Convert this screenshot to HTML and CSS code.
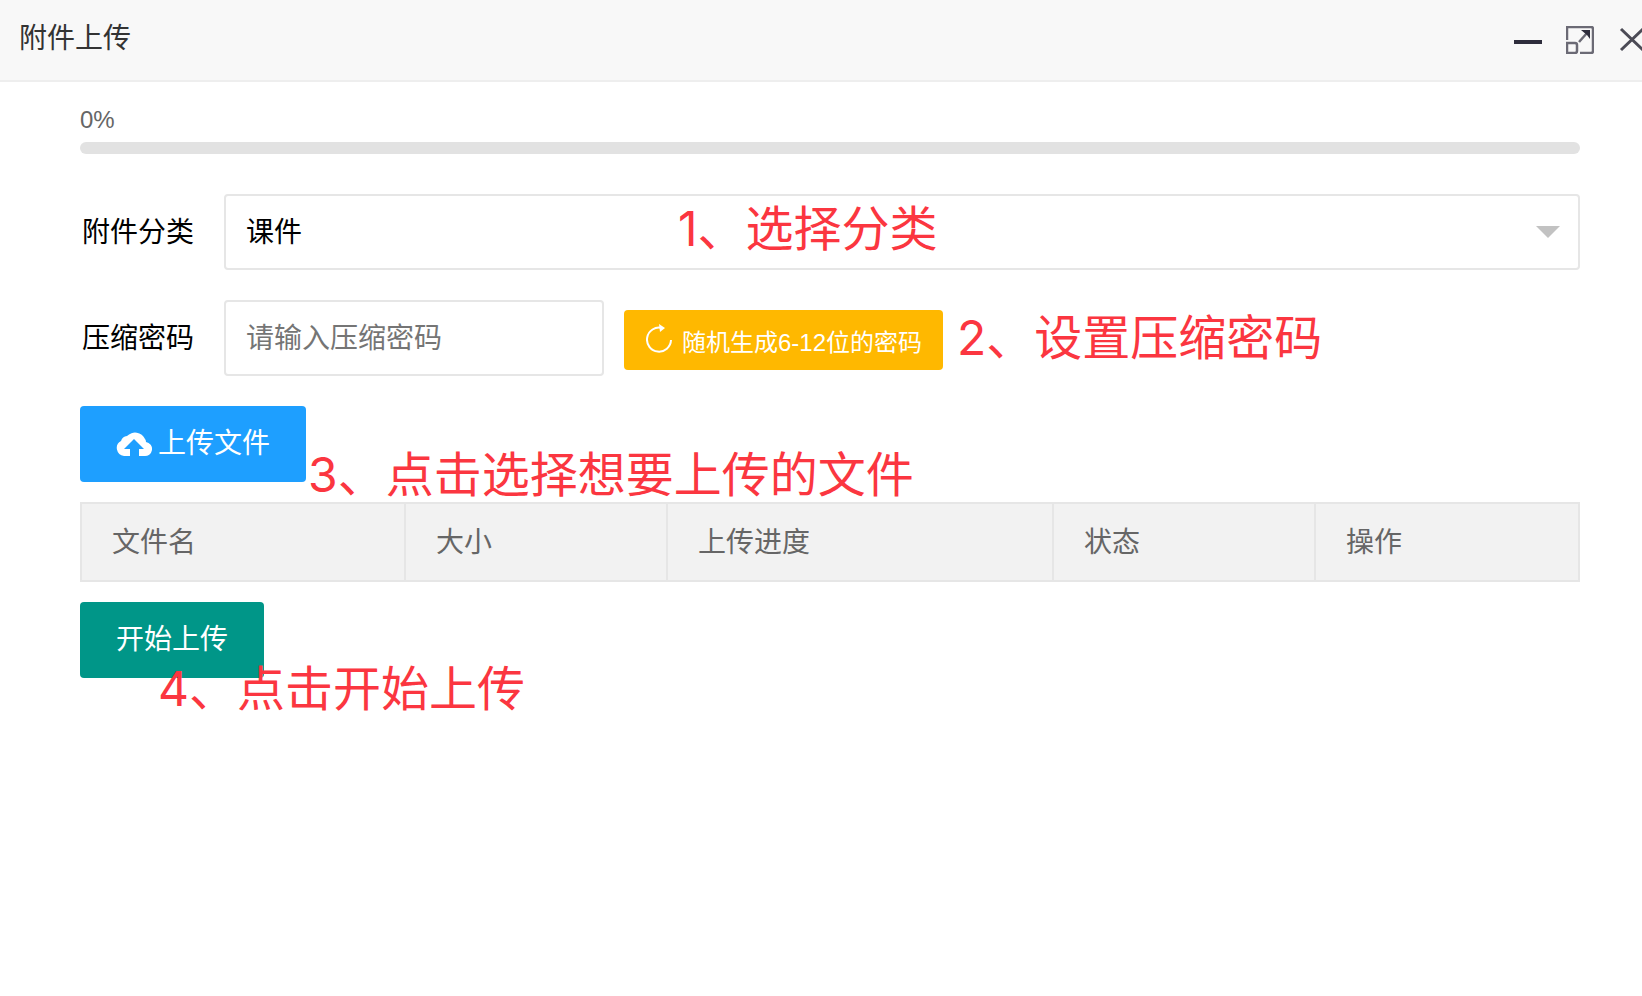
FILE: index.html
```
<!DOCTYPE html>
<html lang="zh-CN">
<head>
    <meta charset="UTF-8">
    <meta name="viewport" content="width=device-width, initial-scale=1.0">
    <title>附件上传</title>
    <link rel="stylesheet" href="styles.css">
</head>
<body>
    <header class="dialog-header">
        <h1 class="dialog-title">附件上传</h1>
        <div class="dialog-tools">
            <button type="button" class="tool" aria-label="最小化">
                <svg width="28" height="28" viewBox="0 0 28 28"><path d="M0 16h28" stroke="#2e2d3c" stroke-width="4"/></svg>
            </button>
            <button type="button" class="tool" aria-label="最大化">
                <svg width="28" height="28" viewBox="0 0 28 28" fill="none" stroke="#6b6a75" stroke-width="2.5">
                    <path d="M1 14V1h24q2 0 2 2v22q0 2-2 2H14"/>
                    <path d="M1 17h8q2 0 2 2v6q0 2-2 2H1z"/>
                    <path d="M13 16l8-9"/>
                    <path d="M15 4h9v9l-3-4z" fill="#2e2d3c" stroke="none"/>
                </svg>
            </button>
            <button type="button" class="tool" aria-label="关闭">
                <svg width="24" height="28" viewBox="0 0 24 28"><path d="M3 3l22 21M3 24L25 3" stroke="#4c4b56" stroke-width="3"/></svg>
            </button>
        </div>
    </header>

    <main class="dialog-body">
        <div class="progress">
            <span class="progress-text">0%</span>
            <div class="progress-bar"></div>
        </div>

        <div class="form-row">
            <label class="form-label" for="category">附件分类</label>
            <div class="select-wrap">
                <select class="field" id="category">
                    <option>课件</option>
                </select>
                <span class="select-arrow"></span>
                <span class="note note-category">1、选择分类</span>
            </div>
        </div>

        <div class="form-row">
            <label class="form-label" for="password">压缩密码</label>
            <input class="field field-password" type="text" id="password" placeholder="请输入压缩密码">
            <button type="button" class="btn btn-small btn-warm">
                <svg width="26" height="32" viewBox="0 0 26 32">
                    <path d="M16 4A12 12 0 1 0 25 16" fill="none" stroke="#fff" stroke-width="2"/>
                    <path d="M13 0l6 4-5 4z" fill="#fff"/>
                </svg>
                <span>随机生成6-12位的密码</span>
            </button>
            <span class="note">2、设置压缩密码</span>
        </div>

        <div class="action">
            <button type="button" class="btn btn-normal">
                <svg width="36" height="28" viewBox="0 0 36 28">
                    <path d="M14 26H8a8 8 0 0 1-3-15 7 7 0 0 1 6-5 11 11 0 0 1 18 3q1 1 1 3a7 7 0 0 1-2 14h-5v-7h5L18 9 8 19h6z" fill="#fff"/>
                </svg>
                <span>上传文件</span>
            </button>
            <span class="note note-choose">3、点击选择想要上传的文件</span>
        </div>

        <table class="file-table">
            <colgroup>
                <col class="col-name">
                <col class="col-size">
                <col class="col-progress">
                <col class="col-status">
                <col class="col-action">
            </colgroup>
            <thead>
                <tr>
                    <th>文件名</th>
                    <th>大小</th>
                    <th>上传进度</th>
                    <th>状态</th>
                    <th>操作</th>
                </tr>
            </thead>
        </table>

        <div class="action">
            <button type="button" class="btn">开始上传</button>
            <span class="note note-start">4、点击开始上传</span>
        </div>
    </main>
</body>
</html>
```
FILE: styles.css
```
* {
    box-sizing: border-box;
}

body {
    margin: 0;
    min-height: 100vh;
    background-color: #fff;
    color: #000;
    font-family: "Liberation Sans", "Noto Sans CJK SC", sans-serif;
    font-size: 28px;
    line-height: 40px;
}

button,
input,
select {
    font: inherit;
}

.dialog-header {
    display: flex;
    justify-content: space-between;
    height: 82px;
    background-color: #f8f8f8;
    border-bottom: 2px solid #eee;
}

.dialog-title {
    margin: 0;
    padding-left: 19px;
    font-size: 28px;
    font-weight: normal;
    line-height: 78px;
    color: #333;
}

.dialog-tools {
    display: flex;
    align-items: center;
    gap: 24px;
}

.tool {
    display: flex;
    padding: 0;
    border: none;
    background: none;
    cursor: pointer;
}

.dialog-body {
    padding: 20px 62px 60px 80px;
}

.progress {
    margin-bottom: 40px;
}

.progress-text {
    display: block;
    margin-bottom: 4px;
    font-size: 24px;
    line-height: 36px;
    color: #666;
}

.progress-bar {
    height: 12px;
    border-radius: 6px;
    background-color: #e2e2e2;
}

.form-row {
    display: flex;
    align-items: center;
    margin-bottom: 30px;
}

.form-label {
    width: 144px;
    padding: 2px 0 0 2px;
}

.select-wrap {
    position: relative;
    flex: 1;
}

.field {
    display: block;
    width: 100%;
    height: 76px;
    padding: 2px 20px 0;
    border: 2px solid #e6e6e6;
    border-radius: 4px;
    background-color: #fff;
    color: #000;
    appearance: none;
}

.field::placeholder {
    color: #757575;
}

.field-password {
    width: 380px;
    margin-right: 20px;
}

.select-arrow {
    position: absolute;
    top: 32px;
    right: 20px;
    border: 12px solid transparent;
    border-top-color: #c2c2c2;
    border-bottom: none;
    pointer-events: none;
}

.btn {
    display: inline-flex;
    align-items: center;
    gap: 6px;
    height: 76px;
    padding: 0 36px;
    border: none;
    border-radius: 4px;
    background-color: #009688;
    color: #fff;
    white-space: nowrap;
    cursor: pointer;
}

.btn-normal {
    background-color: #1e9fff;
}

.btn-small {
    height: 60px;
    margin: 4px 14px 0 0;
    padding: 0 21px 0 22px;
    font-size: 24px;
}

.btn-small span {
    padding-top: 6px;
}

.btn-warm {
    gap: 10px;
    background-color: #ffb800;
}

.note {
    font-family: Inter, "Noto Sans CJK SC", sans-serif;
    font-size: 48px;
    line-height: 62px;
    color: #fb3640;
    white-space: nowrap;
    pointer-events: none;
}

.note-category {
    position: absolute;
    top: 4px;
    left: 454px;
}

.action {
    position: relative;
    display: flex;
}

.note-choose {
    position: absolute;
    top: 38px;
    left: 228px;
}

.note-start {
    position: absolute;
    top: 56px;
    left: 78px;
}

.file-table {
    width: 100%;
    margin: 20px 0;
    table-layout: fixed;
    border-collapse: collapse;
    color: #666;
}

.file-table th {
    height: 78px;
    padding: 2px 30px 0;
    border: 2px solid #e6e6e6;
    background-color: #f2f2f2;
    font-weight: normal;
    text-align: left;
}

.col-name {
    width: 324px;
}

.col-size,
.col-status {
    width: 262px;
}

.col-progress {
    width: 386px;
}
```
